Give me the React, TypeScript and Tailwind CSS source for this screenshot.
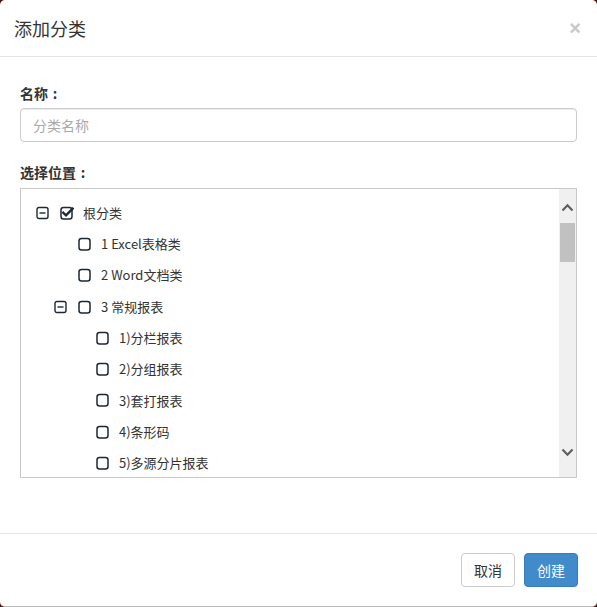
import React from "react";

type Node = { label: string; level: number; toggle?: boolean; checked?: boolean };

const nodes: Node[] = [
  { label: "根分类", level: 0, toggle: true, checked: true },
  { label: "1 Excel表格类", level: 1 },
  { label: "2 Word文档类", level: 1 },
  { label: "3 常规报表", level: 1, toggle: true },
  { label: "1)分栏报表", level: 2 },
  { label: "2)分组报表", level: 2 },
  { label: "3)套打报表", level: 2 },
  { label: "4)条形码", level: 2 },
  { label: "5)多源分片报表", level: 2 },
];

function MinusSquare() {
  return (
    <svg width="13" height="14" viewBox="0 0 13 14" className="shrink-0">
      <rect x="1" y="1.5" width="11" height="11" rx="2" fill="none" stroke="#1c2833" strokeWidth="1.4" />
      <line x1="3.5" y1="7" x2="9.5" y2="7" stroke="#1c2833" strokeWidth="1.4" />
    </svg>
  );
}

function CheckBox({ checked }: { checked?: boolean }) {
  return (
    <svg width="14" height="14" viewBox="0 0 14 14" className="shrink-0">
      <rect x="1" y="1.5" width="11" height="11.5" rx="2.5" fill="none" stroke="#1c2833" strokeWidth="1.5" />
      {checked && (
        <path d="M3.3 6.8 L6 9.4 L12.6 2.6" fill="none" stroke="#1c2833" strokeWidth="2.4" strokeLinecap="square" />
      )}
    </svg>
  );
}

function TreeRow({ node }: { node: Node }) {
  const pad = node.level === 0 ? "pl-[15px]" : node.level === 1 ? "pl-[33px]" : "pl-[51px]";
  return (
    <div className={`flex h-[31.3px] items-center ${pad}`}>
      <div className="flex w-[24px] items-center">{node.toggle ? <MinusSquare /> : null}</div>
      <CheckBox checked={node.checked} />
      <span className="ml-[9px] text-[13px] text-[#333]">{node.label}</span>
    </div>
  );
}

function FieldLabel({ text, className = "" }: { text: string; className?: string }) {
  return (
    <label className={`flex h-[20px] items-center text-[14px] font-bold leading-[20px] text-[#333] ${className}`}>
      <span>{text}</span>
      <span className="inline-block w-[14px] text-center">:</span>
    </label>
  );
}

export default function App() {
  return (
    <div
      className="h-[607px] w-[597px] bg-[#4a1414]"
      style={{ fontFamily: '"Noto Sans CJK SC", "Liberation Sans", sans-serif' }}
    >
      <div className="flex h-[607px] w-[597px] flex-col rounded-[5px] border-b border-[#b8b8b8] bg-white">
        <div className="flex h-[57px] items-center justify-between border-b border-[#e5e5e5] pl-[14px] pr-[16px]">
          <h4 className="text-[18px] font-normal leading-none text-[#333]">添加分类</h4>
          <span className="text-[20px] font-bold leading-none text-[#c8c8c8]" style={{ fontFamily: '"Liberation Sans", sans-serif' }}>
            ×
          </span>
        </div>

        <div className="flex flex-1 flex-col px-[20px] pt-[26px]">
          <FieldLabel text="名称" />
          <div className="mt-[5px] flex h-[34px] items-center rounded-[4px] border border-[#cccccc] px-[12px] shadow-[inset_0_1px_1px_rgba(0,0,0,0.075)]">
            <span className="text-[14px] text-[#a9a9a9]">分类名称</span>
          </div>

          <FieldLabel text="选择位置" className="mt-[20px]" />
          <div className="mt-[6px] flex h-[290px] border border-[#c8c8c8]">
            <div className="flex-1 overflow-hidden pt-[8px]">
              {nodes.map((n) => (
                <TreeRow key={n.label} node={n} />
              ))}
            </div>
            <div className="flex w-[17px] flex-col items-center bg-[#f0f0f0]">
              <div className="flex h-[17px] w-full items-center justify-center pt-[18px]">
                <svg width="13" height="9" viewBox="0 0 13 9">
                  <path d="M1.5 7.5 L6.5 2.3 L11.5 7.5" fill="none" stroke="#5f5f5f" strokeWidth="2.2" />
                </svg>
              </div>
              <div className="mt-[16px] h-[39px] w-[15px] bg-[#c1c1c1]" />
              <div className="flex-1" />
              <div className="mb-[16px] flex h-[17px] w-full items-center justify-center">
                <svg width="13" height="9" viewBox="0 0 13 9">
                  <path d="M1.5 1.5 L6.5 6.7 L11.5 1.5" fill="none" stroke="#5f5f5f" strokeWidth="2.2" />
                </svg>
              </div>
            </div>
          </div>
        </div>

        <div className="flex h-[73px] justify-end gap-[9px] border-t border-[#e5e5e5] px-[19px] pt-[19px]">
          <button className="h-[34px] w-[54px] rounded-[4px] border border-[#cccccc] bg-white text-[14px] text-[#333]">
            取消
          </button>
          <button className="h-[34px] w-[54px] rounded-[4px] border border-[#357ebd] bg-[#428bca] text-[14px] text-white">
            创建
          </button>
        </div>
      </div>
    </div>
  );
}
